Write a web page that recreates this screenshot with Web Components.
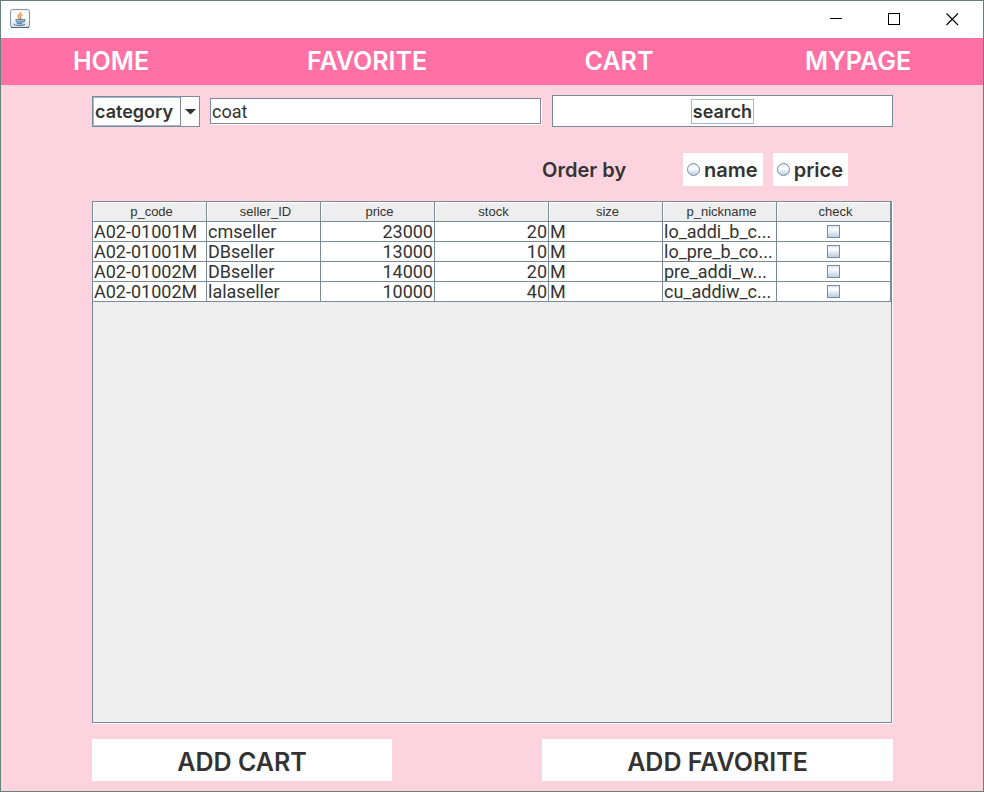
<!DOCTYPE html>
<html lang="en">
<head>
<meta charset="utf-8">
<title>Shop search</title>
<style>
  html, body { margin: 0; height: 100%; }
  body {
    --line: #7a8a99;
    --line-soft: #a3b8cc;
    --ink: #333333;
    color: var(--ink);
    font-family: Inter, Roboto, "Liberation Sans", sans-serif;
  }
</style>
</head>
<body>
<app-window>
  <title-bar slot="top"></title-bar>
  <nav-bar slot="top">
    <nav-item>HOME</nav-item>
    <nav-item>FAVORITE</nav-item>
    <nav-item>CART</nav-item>
    <nav-item>MYPAGE</nav-item>
  </nav-bar>
  <search-row></search-row>
  <order-row>
    <radio-option label="name"></radio-option>
    <radio-option label="price"></radio-option>
  </order-row>
  <product-table></product-table>
  <action-row>
    <action-button>ADD CART</action-button>
    <action-button>ADD FAVORITE</action-button>
  </action-row>
</app-window>

<script>
const define = (name, html, setup) => {
  const template = document.createElement('template');
  template.innerHTML = html;
  customElements.define(name, class extends HTMLElement {
    constructor() {
      super();
      this.attachShadow({ mode: 'open' }).append(template.content.cloneNode(true));
    }
    connectedCallback() { if (setup) setup(this, this.shadowRoot); }
  });
};

define('app-window', `
<style>
  :host { display: flex; flex-direction: column; box-sizing: border-box; min-height: 100vh; border: 1px solid #648278; background: #fdd3e0; }
  main { flex: 1; display: flex; flex-direction: column; padding: 10px 90px 10px 91px; }
</style>
<slot name="top"></slot>
<main><slot></slot></main>`);

define('title-bar', `
<style>
  :host { display: flex; justify-content: space-between; height: 37px; padding: 0 2px 0 9px; background: #fff; }
  .logo { margin-top: 8px; }
  .controls { display: flex; }
  button { width: 58px; border: 0; padding: 0; background: none; display: grid; place-items: center; color: #000; }
  svg { display: block; }
</style>
<svg class="logo" width="20" height="20" viewBox="0 0 20 20" aria-hidden="true">
  <defs><linearGradient id="g" x1="0" y1="0" x2="0" y2="1"><stop offset="0" stop-color="#f4f4f4"/><stop offset=".45" stop-color="#fff"/><stop offset="1" stop-color="#d5dbe1"/></linearGradient></defs>
  <rect x=".5" y=".5" width="19" height="18" rx="2" fill="url(#g)" stroke="#8194a5"/>
  <path d="M1 18.5H19" stroke="#4c657c"/>
  <path d="M10.6 3.2c.7 1.8-3.3 2.9-2.5 4.7.2.7 1 1.2 1.5 1.9M12.4 5.700c-1.8.8-2.6 1.7-1.7 2.7.4.6 0 1.1-.5 1.6" fill="none" stroke="#ef8a3c" stroke-width="1.3"/>
  <path d="M5.500 10.6h8v2.400l-2 1.400H7.500l-2-1.400z" fill="#b4c7d8"/>
  <path d="M5.500 10.6h8M6 12.500c2 .7 5 .7 7 0M6.6 14.200c2 .6 4 .6 5.700 0M13.500 10.500c2.200-.5 2 2-.8 2.800M4.500 15c-2 1.600 8.500 1.900 10.500.3" fill="none" stroke="#5f86a8" stroke-width="1.1"/>
</svg>
<div class="controls">
  <button aria-label="Minimize"><svg width="13" height="13" shape-rendering="crispEdges"><path d="M0 5.5H12" stroke="currentColor"/></svg></button>
  <button aria-label="Maximize"><svg width="13" height="13" shape-rendering="crispEdges"><rect x=".5" y=".5" width="11" height="11" fill="none" stroke="currentColor"/></svg></button>
  <button aria-label="Close"><svg width="13" height="13"><path d="M.5 .5l11.5 11.5M12 .5L.5 12" stroke="currentColor" stroke-width="1.1"/></svg></button>
</div>`);

define('nav-bar', `
<style>
  :host { display: block; background: #ff70a5; color: #fff; }
  nav { display: grid; grid-template-columns: 220fr 292fr 212fr 258fr; height: 47px; }
  ::slotted(nav-item:last-child) { padding-left: 8px; }
</style>
<nav><slot></slot></nav>`);

define('nav-item', `
<style>
  :host { display: grid; }
  a { display: grid; place-items: center; color: inherit; text-decoration: none; font-size: 25px; line-height: 32px; font-weight: 600; padding-bottom: 1px; }
</style>
<a href="#"><slot></slot></a>`);

define('search-row', `
<style>
  :host { display: grid; grid-template-columns: 108px 332fr 341fr; column-gap: 10px; align-items: center; }
  .combo { position: relative; display: block; height: 31px; margin-top: 1px; box-sizing: border-box; border: 1px solid var(--line); background: #fff; }
  select, input, button { font-family: inherit; color: inherit; box-sizing: border-box; margin: 0; border-radius: 0; outline: 0; font-size: 18px; }
  select { appearance: none; display: block; width: 88px; height: 29px; padding: 0 0 0 1px; border: 1px solid var(--line-soft); background: #fff; font-weight: 600; }
  .arrow { position: absolute; right: 0; top: 0; bottom: 0; width: 18px; border-left: 1px solid var(--line); display: grid; place-items: center; pointer-events: none; }
  .arrow svg { display: block; }
  input { width: 100%; height: 26px; padding: 2px 1px 0; border: 1px solid var(--line); background: #fff; box-shadow: 1px 1px #fff; font-family: Roboto, "Liberation Sans", sans-serif; }
  .field { padding-right: 1px; display: block; margin-bottom: 1px; }
  .search { height: 32px; padding: 0; border: 1px solid var(--line); background: #fff; display: grid; place-items: center; font-weight: 600; }
  .search span { border: 1px solid var(--line-soft); padding: 1px 1px 0; line-height: 22px; }
</style>
<div class="combo">
  <select aria-label="category"><option>category</option></select>
  <span class="arrow"><svg width="11" height="6" aria-hidden="true"><path d="M0 0h11L5.500 5.500z" fill="#333"/></svg></span>
</div>
<div class="field"><input type="text" value="coat" aria-label="keyword"></div>
<button class="search"><span>search</span></button>`);

define('order-row', `
<style>
  :host { display: flex; margin: 26px 45px 15px 0; gap: 10px; justify-content: flex-end; align-items: center; }
  .label { width: 131px; padding-top: 1px; font-size: 20px; line-height: 32px; font-weight: 600; white-space: nowrap; }
</style>
<span class="label">Order by</span><slot></slot>`);

define('radio-option', `
<style>
  :host { display: block; background: #fff; }
  label { display: flex; align-items: center; gap: 4px; height: 33px; padding: 0 5px 0 4px; font-size: 20px; font-weight: 600; }
  input { appearance: none; width: 13px; height: 13px; margin: 0 0 1px; border: 1px solid var(--line); border-radius: 50%; background: linear-gradient(#dde8f3, #fff 40%, #b8cfe5); }
  input:checked { background: radial-gradient(#333 35%, #fff 40%); }
</style>
<label><input type="radio"><span></span></label>`,
(host, root) => {
  root.querySelector('span').textContent = host.getAttribute('label');
  root.querySelector('input').addEventListener('change', () => {
    for (const other of host.parentElement.querySelectorAll('radio-option')) {
      if (other !== host) other.shadowRoot.querySelector('input').checked = false;
    }
  });
});

const columns = ['p_code', 'seller_ID', 'price', 'stock', 'size', 'p_nickname', 'check'];
const products = [
  ['A02-01001M', 'cmseller', '23000', '20', 'M', 'lo_addi_b_c...'],
  ['A02-01001M', 'DBseller', '13000', '10', 'M', 'lo_pre_b_co...'],
  ['A02-01002M', 'DBseller', '14000', '20', 'M', 'pre_addi_w...'],
  ['A02-01002M', 'lalaseller', '10000', '40', 'M', 'cu_addiw_c...'],
];

define('product-table', `
<style>
  :host { display: block; flex: 1; margin-right: 1px; border: 1px solid var(--line); background: #eee; box-shadow: 1px 1px #fff; }
  table { width: 100%; table-layout: fixed; border-collapse: separate; border-spacing: 0; }
  th, td { box-sizing: border-box; height: 20px; padding: 0 1px; border: solid var(--line); border-width: 0 1px 1px 0; overflow: hidden; white-space: nowrap; }
  th { padding: 1px 0 0 4px; font: 13px/18px "Liberation Sans", Arial, sans-serif; box-shadow: inset 1px 1px #fff; }
  td { background: #fff; font: 400 18px/19px Roboto, "Liberation Sans", sans-serif; }
  .number { text-align: right; }
  .check { text-align: center; }
  input { appearance: none; display: block; width: 13px; height: 13px; margin: 0 auto; border: 1px solid var(--line); background: linear-gradient(#dde8f3, #fff 30%, #b8cfe5); }
  input:checked { background: #333; }
</style>
<table><thead><tr></tr></thead><tbody></tbody></table>`,
(host, root) => {
  root.querySelector('thead tr').innerHTML = columns.map(c => `<th scope="col">${c}</th>`).join('');
  root.querySelector('tbody').innerHTML = products.map((row, r) =>
    '<tr>' + row.map((v, i) => `<td${i === 2 || i === 3 ? ' class="number"' : ''}>${v}</td>`).join('') +
    `<td class="check"><input type="checkbox" aria-label="check row ${r + 1}"></td></tr>`).join('');
});

define('action-row', `
<style>
  :host { display: grid; grid-template-columns: 300fr 351fr; column-gap: 150px; margin-top: 16px; }
</style>
<slot></slot>`);

define('action-button', `
<style>
  :host { display: grid; }
  button { height: 42px; padding: 3px 0 0; border: 0; background: #fff; color: inherit; font-family: inherit; font-size: 25px; line-height: 32px; font-weight: 600; }
</style>
<button><slot></slot></button>`);
</script>
</body>
</html>
